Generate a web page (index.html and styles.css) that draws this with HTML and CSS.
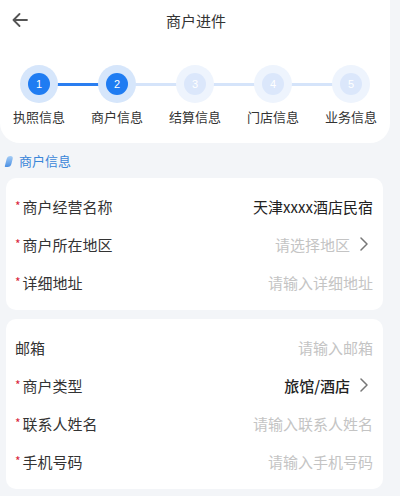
FILE: index.html
```html
<!DOCTYPE html>
<html lang="zh-CN">

<head>
    <meta charset="UTF-8">
    <meta name="viewport" content="width=device-width, initial-scale=1.0">
    <title>商户进件</title>
    <link rel="stylesheet" href="styles.css">
</head>

<body>
    <div class="page">
        <!-- 顶部 -->
        <div class="top">
            <div class="nav">
                <svg class="back" width="16" height="14" viewBox="0 0 16 14">
                    <path d="M15 7H1.5M7.5 1L1.5 7l6 6" fill="none" stroke="#555" stroke-width="1.8" stroke-linecap="round" stroke-linejoin="round"/>
                </svg>
                <span class="nav-title">商户进件</span>
            </div>
            <!-- 步骤条 -->
            <div class="steps">
                <div class="step done">
                    <div class="dot"><span>1</span></div>
                    <p>执照信息</p>
                </div>
                <div class="step done">
                    <div class="dot"><span>2</span></div>
                    <p>商户信息</p>
                </div>
                <div class="step">
                    <div class="dot"><span>3</span></div>
                    <p>结算信息</p>
                </div>
                <div class="step">
                    <div class="dot"><span>4</span></div>
                    <p>门店信息</p>
                </div>
                <div class="step">
                    <div class="dot"><span>5</span></div>
                    <p>业务信息</p>
                </div>
            </div>
        </div>

        <div class="sec-title"><i class="leaf"></i>商户信息</div>

        <div class="card">
            <div class="row">
                <span class="label"><em>*</em>商户经营名称</span>
                <span class="value">天津xxxx酒店民宿</span>
            </div>
            <div class="row">
                <span class="label"><em>*</em>商户所在地区</span>
                <span class="ph">请选择地区</span>
                <svg class="arrow" width="8" height="14" viewBox="0 0 8 14">
                    <path d="M1 1l6 6-6 6" fill="none" stroke="#777" stroke-width="1.5" stroke-linecap="round" stroke-linejoin="round"/>
                </svg>
            </div>
            <div class="row">
                <span class="label"><em>*</em>详细地址</span>
                <span class="ph">请输入详细地址</span>
            </div>
        </div>

        <div class="card">
            <div class="row">
                <span class="label">邮箱</span>
                <span class="ph">请输入邮箱</span>
            </div>
            <div class="row">
                <span class="label"><em>*</em>商户类型</span>
                <span class="value bold">旅馆/酒店</span>
                <svg class="arrow" width="8" height="14" viewBox="0 0 8 14">
                    <path d="M1 1l6 6-6 6" fill="none" stroke="#777" stroke-width="1.5" stroke-linecap="round" stroke-linejoin="round"/>
                </svg>
            </div>
            <div class="row">
                <span class="label"><em>*</em>联系人姓名</span>
                <span class="ph">请输入联系人姓名</span>
            </div>
            <div class="row">
                <span class="label"><em>*</em>手机号码</span>
                <span class="ph">请输入手机号码</span>
            </div>
        </div>
    </div>
</body>

</html>
```

FILE: styles.css
```css
body {
    margin: 0;
    background: #f3f5f8;
    font-family: "Noto Sans CJK SC", "Noto Sans", sans-serif;
    color: #333;
}

.page {
    width: 390px;
    overflow: hidden;
}

/* 顶部白色区域 */
.top {
    background: #fff;
    border-radius: 0 0 20px 20px;
    padding-bottom: 17px;
}

.nav {
    height: 40px;
    display: flex;
    align-items: center;
    justify-content: center;
    position: relative;
}

.nav .back {
    position: absolute;
    left: 12px;
    top: 13px;
}

.nav-title {
    font-size: 15px;
    color: #333;
    margin-left: 2px;
}

/* 步骤条 */
.steps {
    display: grid;
    grid-template-columns: repeat(5, 1fr);
    padding-top: 25px;
}

.step {
    display: flex;
    flex-direction: column;
    align-items: center;
    position: relative;
}

.step:not(:last-child)::after {
    content: "";
    position: absolute;
    top: 18px;
    left: 50%;
    width: 100%;
    height: 3px;
    background: #d5e4fa;
}

.step.done:first-child::after {
    background: #2a7ef0;
}

.dot {
    width: 38px;
    height: 38px;
    border-radius: 50%;
    background: #eef4fd;
    display: flex;
    align-items: center;
    justify-content: center;
    position: relative;
    z-index: 1;
}

.dot span {
    width: 22px;
    height: 22px;
    border-radius: 50%;
    background: #dbe7fb;
    color: #fff;
    font-size: 11px;
    line-height: 22px;
    text-align: center;
    font-family: "Liberation Sans", sans-serif;
}

.step.done .dot {
    background: #d6e6fb;
}

.step.done .dot span {
    background: #1f7cf2;
}

.step p {
    margin: 5px 0 0;
    font-size: 13px;
    line-height: 18px;
    color: #333;
}

/* 分组标题 */
.sec-title {
    display: flex;
    align-items: center;
    margin: 9px 0 8px 6px;
    font-size: 13px;
    line-height: 18px;
    color: #3a86d8;
}

.leaf {
    width: 6px;
    height: 11px;
    border-radius: 4px 4px 4px 1px;
    background: linear-gradient(180deg, #a6cdf6, #4a8fe3);
    transform: skewX(-14deg);
    margin-right: 7px;
}

/* 表单卡片 */
.card {
    background: #fff;
    border-radius: 10px;
    margin: 0 7px 9px 6px;
    padding: 9px 10px 9px 9px;
}

.row {
    height: 38px;
    display: flex;
    align-items: center;
    font-size: 15px;
}

.label {
    flex: 1;
    color: #333;
}

.label em {
    font-style: normal;
    color: #d9263b;
    font-size: 12px;
    margin-right: 2px;
    position: relative;
    top: -2px;
}

.value {
    color: #222;
}

.value.bold {
    font-weight: 500;
}

.ph {
    color: #c4c4c4;
}

.arrow {
    margin-left: 10px;
    margin-right: 5px;
}
```
